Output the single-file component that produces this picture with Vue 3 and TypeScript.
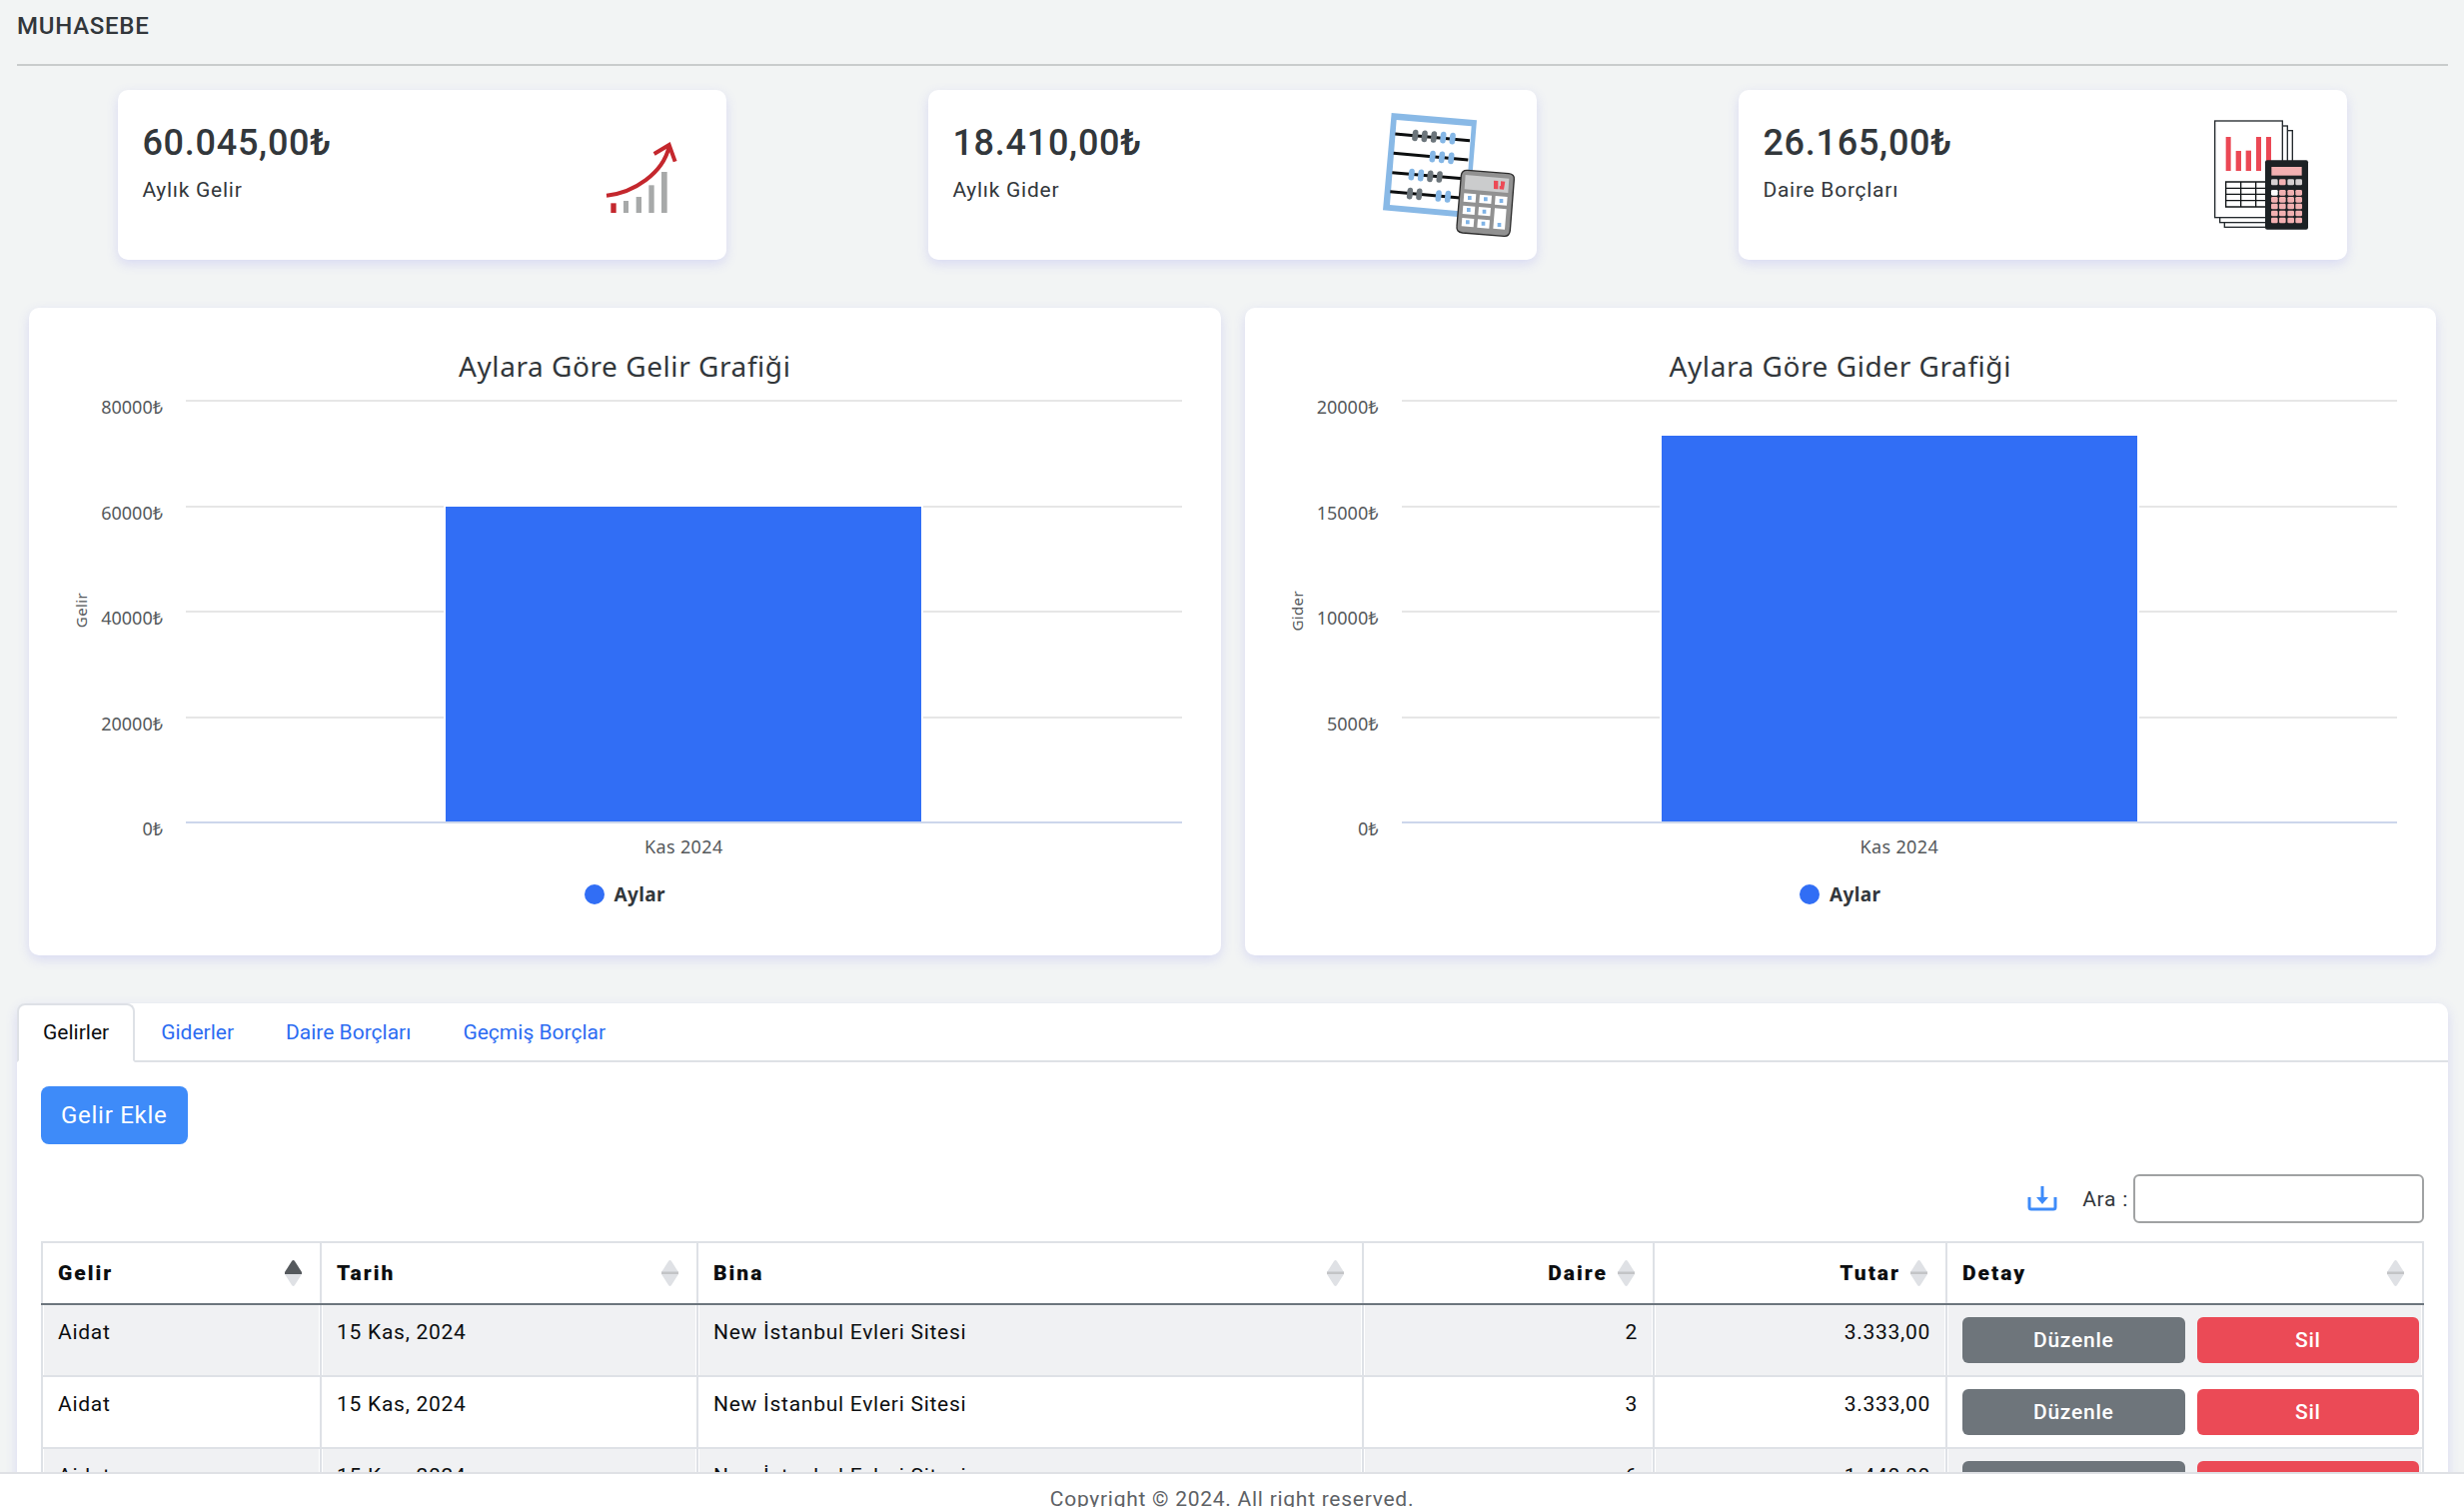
<script setup lang="ts">
import { ref } from 'vue'

interface Chart {
  title: string
  axis: string
  max: number
  value: number
  ticks: number[]
}

interface Column {
  label: string
  numeric?: boolean
  sorted?: boolean
}

interface Row {
  kind: string
  date: string
  building: string
  flat: number
  amount: string
}

const charts: Chart[] = [
  { title: 'Aylara Göre Gelir Grafiği', axis: 'Gelir', max: 80000, value: 60045, ticks: [80000, 60000, 40000, 20000, 0] },
  { title: 'Aylara Göre Gider Grafiği', axis: 'Gider', max: 20000, value: 18410, ticks: [20000, 15000, 10000, 5000, 0] },
]

const tabs: string[] = ['Gelirler', 'Giderler', 'Daire Borçları', 'Geçmiş Borçlar']
const activeTab = ref<string>('Gelirler')
const search = ref<string>('')

const columns: Column[] = [
  { label: 'Gelir', sorted: true },
  { label: 'Tarih' },
  { label: 'Bina' },
  { label: 'Daire', numeric: true },
  { label: 'Tutar', numeric: true },
  { label: 'Detay' },
]

const rows: Row[] = [
  { kind: 'Aidat', date: '15 Kas, 2024', building: 'New İstanbul Evleri Sitesi', flat: 2, amount: '3.333,00' },
  { kind: 'Aidat', date: '15 Kas, 2024', building: 'New İstanbul Evleri Sitesi', flat: 3, amount: '3.333,00' },
  { kind: 'Aidat', date: '15 Kas, 2024', building: 'New İstanbul Evleri Sitesi', flat: 6, amount: '1.440,00' },
]

const keyColumns: number[] = [279, 303, 328, 352]
const keyRows: number[] = [300, 321, 341, 362, 383]
</script>

<template>
  <div class="shell">
    <main class="page">
      <h1 class="page-title">MUHASEBE</h1>
      <hr class="rule" />

      <section class="stats">
        <div class="stat-slot">
          <article class="card stat">
            <div>
              <h2 class="stat-value">60.045,00₺</h2>
              <p class="stat-label">Aylık Gelir</p>
            </div>
            <svg class="stat-art" viewBox="0 0 144 138" aria-hidden="true">
              <g transform="translate(13 14) scale(0.3333)">
                <rect x="94" y="250" width="16" height="29" fill="#c4272d" />
                <g fill="#a7a9a9">
                  <rect x="132" y="243" width="15" height="36" />
                  <rect x="170" y="231" width="16" height="48" />
                  <rect x="208" y="196" width="16" height="83" />
                  <rect x="246" y="156" width="17" height="123" />
                </g>
                <g fill="none" stroke="#c4272d" stroke-width="12">
                  <path d="M81 227C164 218 250 160 269 80" />
                  <path d="M224 102L269 75L287 125" />
                </g>
              </g>
            </svg>
          </article>
        </div>

        <div class="stat-slot">
          <article class="card stat">
            <div>
              <h2 class="stat-value">18.410,00₺</h2>
              <p class="stat-label">Aylık Gider</p>
            </div>
            <svg class="stat-art" viewBox="0 0 144 138" aria-hidden="true">
              <g transform="translate(-18 -16) scale(0.3333)">
                <path fill="#89b9e6" fill-rule="evenodd" d="M98 69L354 91L330 384L72 361ZM113 90L93 345L319 365L338 109Z" />
                <g stroke="#0c0e0f" stroke-width="9">
                  <path d="M109 132L333 152M104 190L328 210M100 248L322 267M94 305L312 325" />
                </g>
                <g stroke-width="17" stroke-linecap="round">
                  <path stroke="#6c757b" d="M170 128L168 145M198 130L196 148M226 132L224 150M215 250L213 268M243 252L241 270M154 302L152 320M182 304L180 322" />
                  <path stroke="#85b7e6" d="M254 134L252 152M282 137L280 155M222 191L220 209M250 193L248 211M278 196L276 214M159 245L157 263M187 247L185 266M240 309L238 327M268 311L266 330" />
                </g>
                <path d="M326 241L450 251Q468 253 466 269L454 422Q452 440 436 439L311 429Q292 427 294 410L307 257Q309 240 326 241Z" fill="#919191" stroke="#2c2c2c" stroke-width="4" />
                <path fill="#cbcccd" d="M320 255L451 266L448 309L317 298Z" />
                <path fill="#ec4a56" d="M405 272L418 273V298L405 297ZM426 274L439 275L435 299L422 298V289L426 288Z" />
                <g fill="#fff">
                  <path d="M316 310L352 313L350 338L314 335ZM363 314L399 317L397 342L361 339ZM410 318L446 321L444 347L408 344Z" />
                  <path d="M313 347L349 350L347 375L311 372ZM360 351L396 354L394 379L358 376Z" />
                  <path d="M310 384L346 387L344 412L308 409ZM357 388L393 391L391 416L355 413ZM408 355L443 358L438 419L403 416Z" />
                </g>
                <g fill="#7fb3e6">
                  <path d="M327 318h11v12h-11zM375 322h11v12h-11zM422 327h11v12h-11zM324 354h11v12h-11zM371 359h11v12h-11zM321 391h11v12h-11zM368 395h11v12h-11zM416 399h11v12h-11z" />
                </g>
              </g>
            </svg>
          </article>
        </div>

        <div class="stat-slot">
          <article class="card stat">
            <div>
              <h2 class="stat-value">26.165,00₺</h2>
              <p class="stat-label">Daire Borçları</p>
            </div>
            <svg class="stat-art" viewBox="0 0 144 138" aria-hidden="true">
              <g transform="translate(-9 -16) scale(0.3333)">
                <g fill="#fff" stroke="#23292d" stroke-width="4">
                  <rect x="139" y="122" width="204" height="290" />
                  <rect x="125" y="108" width="203" height="290" />
                  <rect x="110" y="93" width="203" height="290" />
                </g>
                <g fill="#eb4855">
                  <rect x="143" y="141" width="15" height="102" />
                  <rect x="173" y="183" width="16" height="60" />
                  <rect x="203" y="182" width="16" height="61" />
                  <rect x="234" y="141" width="15" height="102" />
                  <rect x="264" y="141" width="15" height="102" />
                </g>
                <path fill="none" stroke="#101416" stroke-width="4" d="M262 276H143V351H262M143 295H262M143 313H262M143 332H262M188 276V351M233 276V351" />
                <rect x="261" y="211" width="129" height="208" rx="6" fill="#1c2124" />
                <rect x="280" y="231" width="91" height="26" fill="#f2b0b1" />
                <rect
                  v-for="(kx, i) in keyColumns"
                  :key="kx"
                  :x="kx"
                  y="268"
                  width="20"
                  height="18"
                  rx="4"
                  :fill="i === 1 ? '#f2b0b1' : '#d5d0d1'"
                />
                <template v-for="(ky, r) in keyRows" :key="ky">
                  <rect
                    v-for="(kx, c) in keyColumns"
                    :key="kx"
                    :x="kx"
                    :y="ky"
                    width="20"
                    height="17"
                    rx="4"
                    :fill="r === 0 && c === 0 ? '#ffffff' : '#f2b0b1'"
                  />
                </template>
              </g>
            </svg>
          </article>
        </div>
      </section>

      <section class="charts">
        <figure v-for="chart in charts" :key="chart.title" class="card chart">
          <figcaption class="chart-title">{{ chart.title }}</figcaption>
          <div class="chart-body">
            <div class="axis-title"><span>{{ chart.axis }}</span></div>
            <div class="axis-labels">
              <span v-for="tick in chart.ticks" :key="tick">{{ tick }}₺</span>
            </div>
            <div class="plot-column">
              <div class="plot">
                <div class="grid-lines">
                  <i></i><i></i><i></i><i></i>
                </div>
                <div class="bar" :style="{ height: (chart.value / chart.max) * 100 + '%' }"></div>
              </div>
              <div class="x-label">Kas 2024</div>
            </div>
          </div>
          <div class="legend"><i class="dot"></i><span>Aylar</span></div>
        </figure>
      </section>

      <section class="card ledger">
        <nav class="tabs">
          <a
            v-for="tab in tabs"
            :key="tab"
            href="#"
            class="tab"
            :class="{ active: tab === activeTab }"
            @click.prevent="activeTab = tab"
          >{{ tab }}</a>
        </nav>
        <div class="ledger-body">
          <button type="button" class="add">Gelir Ekle</button>
          <div class="tools">
            <button type="button" class="download" aria-label="İndir">
              <svg width="30" height="25" viewBox="0 0 30 25" aria-hidden="true">
                <path d="M2 11V21Q2 23 4 23H26Q28 23 28 21V11" fill="none" stroke="#3e8bf9" stroke-width="3" />
                <path d="M15 0V13" stroke="#3e8bf9" stroke-width="3" />
                <path d="M9 11H21L15 18Z" fill="#3e8bf9" />
              </svg>
            </button>
            <label for="search">Ara :</label>
            <input id="search" v-model="search" type="text" class="search" />
          </div>
          <table class="table">
            <colgroup>
              <col class="c-kind" />
              <col class="c-date" />
              <col />
              <col class="c-flat" />
              <col class="c-amount" />
              <col class="c-detail" />
            </colgroup>
            <thead>
              <tr>
                <th v-for="col in columns" :key="col.label" scope="col">
                  <div class="head" :class="{ numeric: col.numeric }">
                    <span>{{ col.label }}</span>
                    <svg width="17" height="26" viewBox="0 0 17 26" aria-hidden="true">
                      <path d="M0 12L7 1Q8.500 -1 10 1L17 12V14H0Z" :fill="col.sorted ? '#55595d' : '#dfe1e5'" />
                      <path d="M0 14L7 25Q8.500 27 10 25L17 14Z" fill="#dfe1e5" />
                      <path v-if="!col.sorted" d="M0 11.500H17V14H0Z" fill="#c3c4c6" />
                    </svg>
                  </div>
                </th>
              </tr>
            </thead>
            <tbody>
              <tr v-for="row in rows" :key="row.flat">
                <td>{{ row.kind }}</td>
                <td>{{ row.date }}</td>
                <td>{{ row.building }}</td>
                <td class="numeric">{{ row.flat }}</td>
                <td class="numeric">{{ row.amount }}</td>
                <td class="actions">
                  <div class="action-row">
                    <button type="button" class="action edit">Düzenle</button>
                    <button type="button" class="action remove">Sil</button>
                  </div>
                </td>
              </tr>
            </tbody>
          </table>
        </div>
      </section>
    </main>
    <footer class="footer">Copyright © 2024. All right reserved.</footer>
  </div>
</template>

<style>
body {
  margin: 0;
  background: #f2f4f4;
}
</style>

<style scoped>
* {
  box-sizing: border-box;
}

.shell {
  display: flex;
  flex-direction: column;
  height: 100vh;
  overflow: hidden;
  font-family: Roboto, "Liberation Sans", sans-serif;
  font-size: 21px;
  line-height: 24px;
  letter-spacing: 0.035em;
  color: #32373b;
}

.page {
  flex: 1;
  min-height: 0;
  overflow: hidden;
  padding: 12px 16px 0 17px;
}

.page-title {
  margin: 0;
  font-size: 24px;
  line-height: 28px;
  font-weight: 500;
}

.rule {
  height: 2px;
  margin: 24px 0;
  border: 0;
  background: #c9cccc;
}

.card {
  background: #fff;
  border-radius: 10px;
  box-shadow: 0 4px 12px rgba(98, 98, 240, 0.18);
}

.stats {
  display: grid;
  grid-template-columns: repeat(3, 1fr);
}

.stat {
  display: flex;
  justify-content: space-between;
  width: 75%;
  height: 170px;
  margin: 0 auto;
  padding: 16px 16px 16px 24px;
}

.stat-value {
  margin: 16px 0 14px;
  font-size: 36px;
  line-height: 42px;
  font-weight: 500;
}

.stat-label {
  margin: 0;
}

.stat-art {
  flex: none;
  width: 144px;
  height: 138px;
}

.charts {
  display: grid;
  grid-template-columns: repeat(2, 1fr);
  gap: 24px;
  margin: 48px 12px;
}

.chart {
  margin: 0;
  padding: 38px 0 48px;
  font-family: "Noto Sans", sans-serif;
  font-size: 18px;
  letter-spacing: 0.02em;
  color: #55595c;
}

.chart-title {
  font-size: 28px;
  line-height: 40px;
  letter-spacing: 0.02em;
  text-align: center;
  color: #32373b;
}

.chart-body {
  display: flex;
  margin: 9px 39px 0 42px;
}

.axis-title {
  display: flex;
  align-items: center;
  justify-content: center;
  width: 20px;
  height: 432px;
  font-size: 15px;
  line-height: 20px;
}

.axis-title span {
  writing-mode: vertical-rl;
  transform: rotate(180deg);
}

.axis-labels {
  display: flex;
  flex-direction: column;
  justify-content: space-between;
  width: 72px;
  height: 446px;
  margin-right: 23px;
  letter-spacing: normal;
  text-align: right;
}

.plot-column {
  flex: 1;
  padding-top: 5px;
}

.plot {
  display: grid;
  height: 424px;
  border-bottom: 2px solid #ccd6eb;
}

.grid-lines,
.bar {
  grid-area: 1 / 1;
}

.grid-lines {
  display: flex;
  flex-direction: column;
}

.grid-lines i {
  flex: 1;
  border-top: 2px solid #e6e6e6;
}

.bar {
  align-self: end;
  justify-self: center;
  width: calc(48% + 2px);
  border: 2px solid #fff;
  border-bottom: 0;
  background: #316ef5;
}

.x-label {
  margin-top: 11px;
  text-align: center;
}

.legend {
  display: flex;
  align-items: center;
  justify-content: center;
  gap: 10px;
  margin-top: 24px;
  padding-bottom: 1px;
  font-size: 19px;
  font-weight: 700;
  color: #32373b;
}

.dot {
  width: 20px;
  height: 20px;
  border-radius: 50%;
  background: #316ef5;
}

.tabs {
  display: flex;
  border-bottom: 2px solid #dee1e6;
  letter-spacing: normal;
}

.tab {
  margin-bottom: -2px;
  padding: 15px 24px 16px;
  border: 2px solid transparent;
  border-radius: 8px 8px 0 0;
  color: #2c6cf2;
  text-decoration: none;
}

.tab.active {
  border-color: #dee1e6 #dee1e6 #fff;
  background: #fff;
  color: #0c0e10;
}

.ledger-body {
  padding: 24px 24px 0;
}

button {
  border: 0;
  font: inherit;
  letter-spacing: inherit;
  color: #fff;
  cursor: pointer;
}

.add {
  display: block;
  padding: 16px 20px;
  border-radius: 8px;
  background: #3e8bf9;
  font-size: 24px;
  line-height: 26px;
}

.tools {
  display: flex;
  align-items: center;
  justify-content: flex-end;
  margin: 30px 0 18px;
}

.download {
  display: flex;
  margin-right: 25px;
  padding: 0;
  background: none;
}

.search {
  width: 291px;
  height: 49px;
  margin-left: 5px;
  padding: 0 12px;
  border: 2px solid #a0a2a3;
  border-radius: 6px;
  background: #fff;
  font: inherit;
}

.table {
  width: 100%;
  table-layout: fixed;
  border-collapse: collapse;
  color: #0c0e10;
}

.c-kind {
  width: 279px;
}

.c-date {
  width: 377px;
}

.c-flat {
  width: 291px;
}

.c-amount {
  width: 293px;
}

.c-detail {
  width: 477px;
}

th,
td {
  border: 2px solid #dee1e6;
  text-align: left;
}

th {
  padding: 18px 18px 18px 15px;
  border-bottom-color: #6c757d;
  font-weight: 900;
  letter-spacing: 2px;
}

.head {
  display: flex;
  align-items: center;
  justify-content: space-between;
  height: 24px;
}

.head.numeric {
  justify-content: flex-end;
  gap: 10px;
}

td {
  height: 72px;
  padding: 15px 15px 0;
  vertical-align: top;
}

td.numeric {
  text-align: right;
}

td.actions {
  padding: 12px 3px 12px 15px;
}

tbody tr:nth-child(odd) td {
  background: #f0f1f3;
  box-shadow: inset 1px 0 #fff, inset -1px 0 #fff;
}

.action-row {
  display: grid;
  grid-template-columns: repeat(2, 1fr);
  gap: 12px;
}

.action {
  height: 46px;
  padding: 0;
  border-radius: 6px;
  font-weight: 500;
}

.edit {
  background: #6e757b;
}

.remove {
  background: #eb4a56;
}

.footer {
  flex: none;
  height: 35px;
  padding-top: 13px;
  overflow: hidden;
  border-top: 2px solid #dfe1e5;
  background: #fff;
  text-align: center;
  color: #5e6266;
}
</style>
